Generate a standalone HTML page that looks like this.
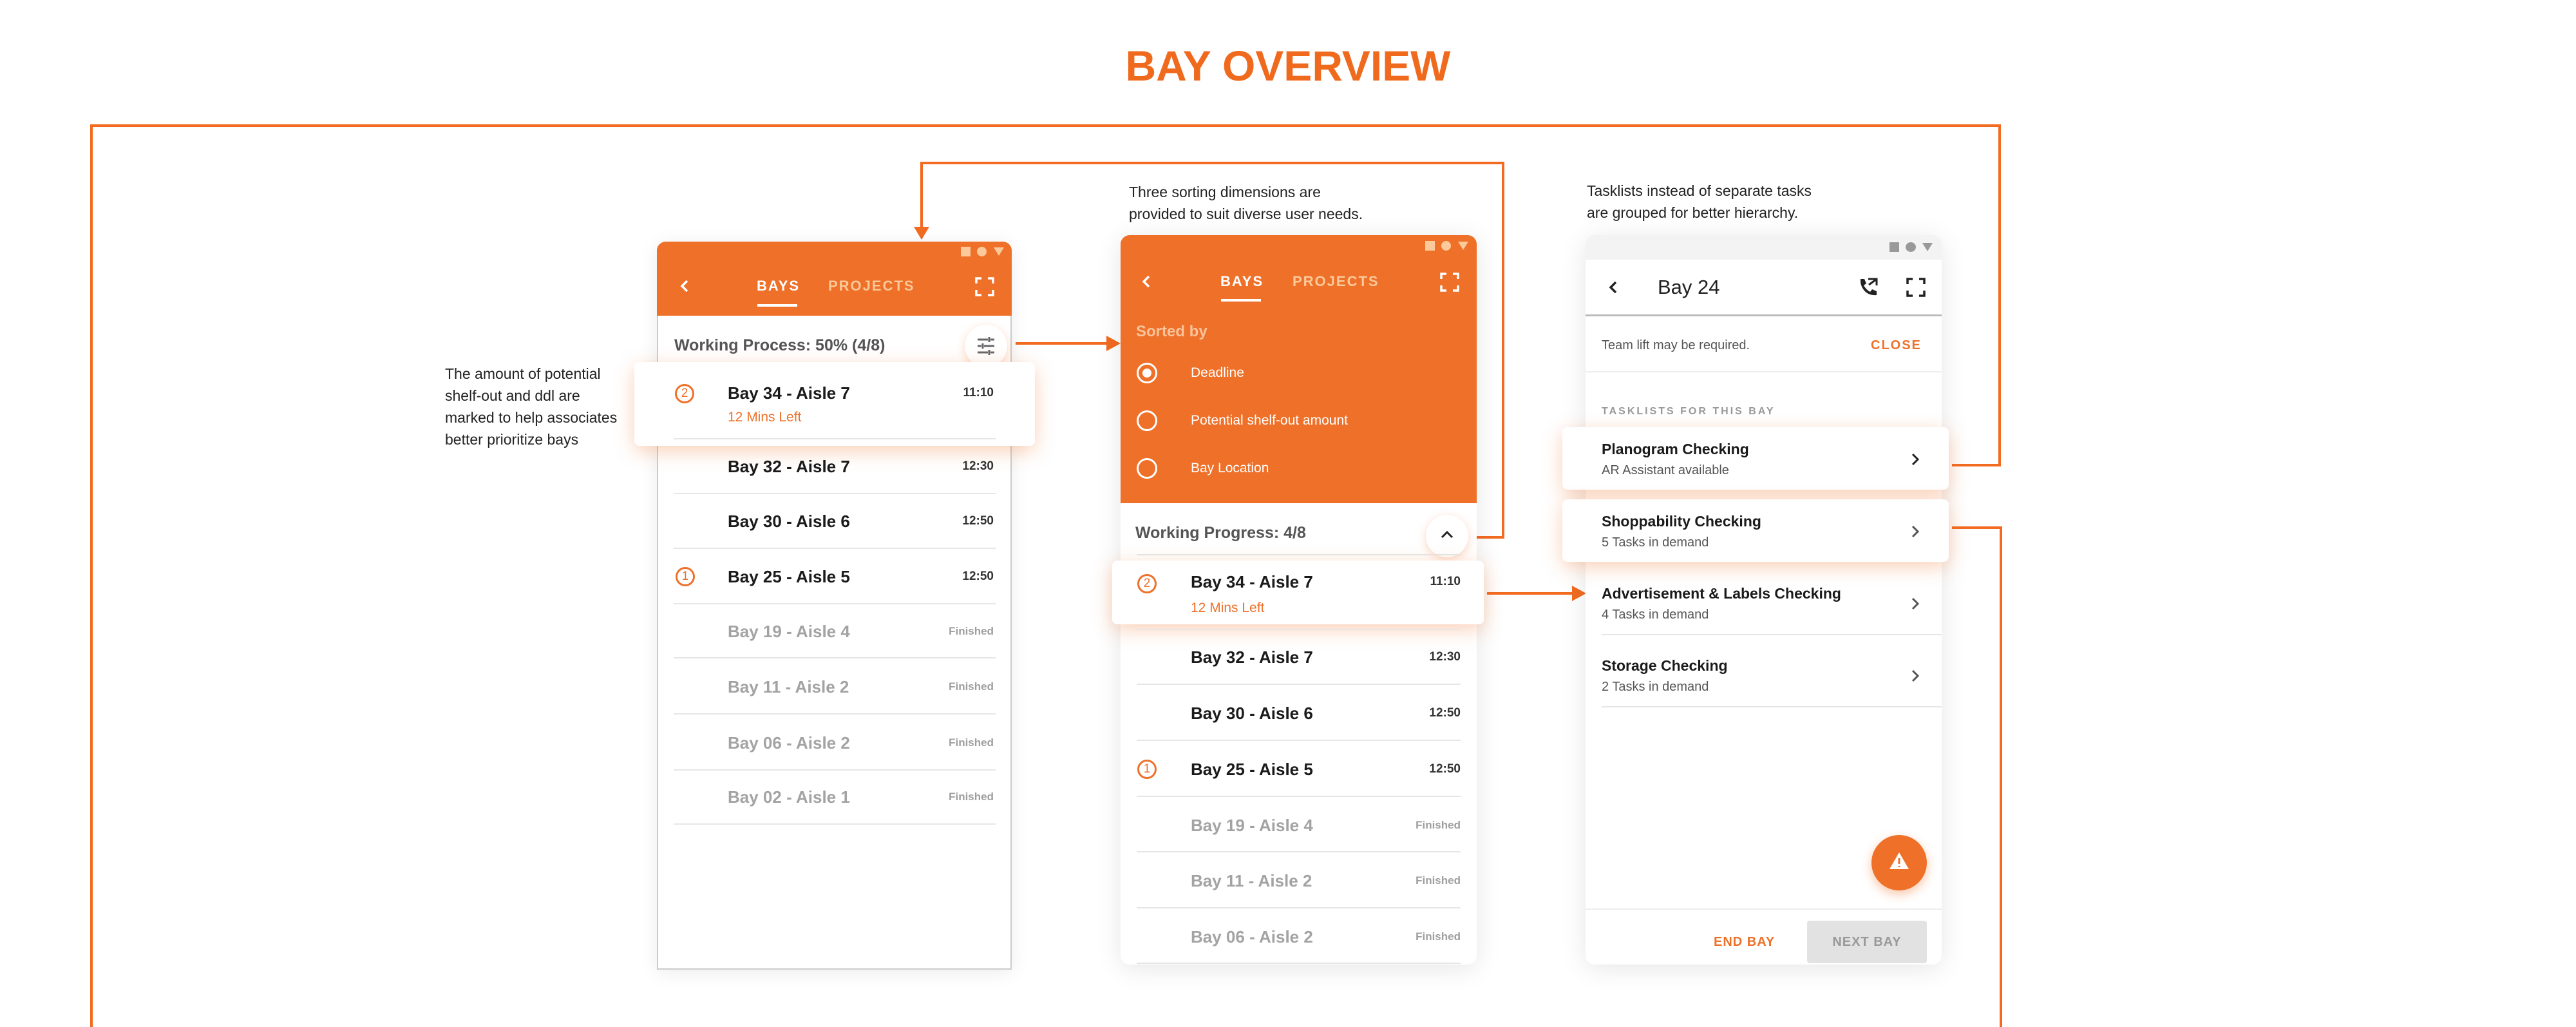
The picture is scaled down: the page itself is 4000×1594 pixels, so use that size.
<!DOCTYPE html>
<html><head><meta charset="utf-8"><style>
*{margin:0;padding:0;box-sizing:border-box}
body{width:4000px;height:1594px;position:relative;overflow:hidden;background:#fff;font-family:"Liberation Sans",sans-serif;}
.a{position:absolute;white-space:nowrap}
.t{line-height:40px;height:40px}
.o{background:#EE7029}
.ln{position:absolute;background:#F26B21}
.sep{position:absolute;height:2px;background:#e6e6e6}
.bay{font-weight:bold;font-size:26px;color:#1a1a1a}
.gray{color:#a3a3a3}
.tm{font-weight:bold;font-size:19px;color:#333;text-align:right}
.fin{font-weight:bold;font-size:17px;color:#9e9e9e;text-align:right}
.sub{font-size:21px;color:#EE7029}
.num{position:absolute;width:30px;height:30px;border:3px solid #EE7029;border-radius:50%;color:#EE7029;font-size:19px;line-height:24px;text-align:center}
.tab{font-size:22px;font-weight:bold;letter-spacing:2px}
.card{position:absolute;background:#fff;border-radius:8px;box-shadow:0 8px 30px rgba(240,120,50,.35)}
.ann{font-size:23px;color:#222;line-height:34px}
</style></head><body>

<div class="a" style="left:0;width:4000px;top:64px;text-align:center;font-size:66px;font-weight:bold;color:#F06A1E;line-height:76px">BAY OVERVIEW</div>

<div class="ln" style="left:140px;top:193px;width:2967px;height:4px"></div>
<div class="ln" style="left:140px;top:193px;width:4px;height:1401px"></div>
<div class="ln" style="left:3103px;top:193px;width:4px;height:531px"></div>
<div class="ln" style="left:3031px;top:720px;width:76px;height:4px"></div>
<div class="ln" style="left:3031px;top:817px;width:76px;height:4px"></div>
<div class="ln" style="left:3105px;top:817px;width:4px;height:777px"></div>

<div class="ln" style="left:2293px;top:832px;width:43px;height:4px"></div>
<div class="ln" style="left:2332px;top:251px;width:4px;height:585px"></div>
<div class="ln" style="left:1429px;top:251px;width:907px;height:4px"></div>
<div class="ln" style="left:1429px;top:251px;width:4px;height:105px"></div>
<div class="a" style="left:1419px;top:352px;width:0;height:0;border-left:12px solid transparent;border-right:12px solid transparent;border-top:20px solid #F26B21"></div>

<div class="ln" style="left:1577px;top:531px;width:145px;height:4px"></div>
<div class="a" style="left:1718px;top:521px;border-top:12px solid transparent;border-bottom:12px solid transparent;border-left:22px solid #F26B21"></div>
<div class="ln" style="left:2309px;top:919px;width:136px;height:4px"></div>
<div class="a" style="left:2441px;top:909px;border-top:12px solid transparent;border-bottom:12px solid transparent;border-left:22px solid #F26B21"></div>

<div class="a ann" style="left:691px;top:563px">The amount of potential<br>shelf-out and ddl are<br>marked to help associates<br>better prioritize bays</div>
<div class="a ann" style="left:1753px;top:281px">Three sorting dimensions are<br>provided to suit diverse user needs.</div>
<div class="a ann" style="left:2464px;top:279px">Tasklists instead of separate tasks<br>are grouped for better hierarchy.</div>

<!-- PHONE 1 -->
<div class="a" style="left:1020px;top:375px;width:551px;height:1130px;background:#fff;border:2px solid #ccc;border-top:none;border-radius:14px 14px 0 0;box-shadow:0 4px 30px rgba(0,0,0,.08)"></div>
<div class="a o" style="left:1020px;top:375px;width:551px;height:115px;border-radius:14px 14px 0 0"></div>
<div class="a" style="left:1492px;top:383px;width:15px;height:15px;background:#fbc99a"></div>
<div class="a" style="left:1517px;top:383px;width:15px;height:15px;background:#fbc99a;border-radius:50%"></div>
<div class="a" style="left:1543px;top:384px;border-left:8px solid transparent;border-right:8px solid transparent;border-top:13px solid #fbc99a"></div>
<svg class="a" style="left:1053px;top:432px" width="20" height="24"><path d="M14 4 L6 12 L14 20" stroke="#fff" stroke-width="3.5" fill="none"/></svg>
<div class="a t tab" style="left:1175px;top:424px;color:#fff">BAYS</div>
<div class="a" style="left:1176px;top:472px;width:62px;height:4px;background:#fff"></div>
<div class="a t tab" style="left:1286px;top:424px;color:#fbc99a">PROJECTS</div>
<svg class="a" style="left:1514px;top:430px" width="30" height="30"><path d="M2 10V2h8M20 2h8v8M28 20v8h-8M10 28H2v-8" stroke="#fff" stroke-width="3.5" fill="none"/></svg>
<div class="a t" style="left:1047px;top:516px;font-size:25px;font-weight:bold;color:#555">Working Process: 50% (4/8)</div>
<div class="a" style="left:1498px;top:504px;width:66px;height:66px;border-radius:50%;background:#fff;box-shadow:0 4px 14px rgba(240,120,50,.3)"></div>
<svg class="a" style="left:1515px;top:521px" width="32" height="32"><path d="M3 6h16M23 6h6M3 16h6M13 16h16M3 26h16M23 26h6M21 2v8M11 12v8M21 22v8" stroke="#666" stroke-width="3" fill="none"/></svg>
<div class="sep" style="left:1046px;top:574px;width:500px"></div>

<div class="card" style="left:985px;top:562px;width:622px;height:130px"></div>
<div class="num" style="left:1048px;top:596px">2</div>
<div class="a t bay" style="left:1130px;top:590px">Bay 34 - Aisle 7</div>
<div class="a t sub" style="left:1130px;top:628px">12 Mins Left</div>
<div class="a t tm" style="left:1443px;top:590px;width:100px">11:10</div>
<div class="sep" style="left:1046px;top:680px;width:500px"></div>

<div class="a t bay" style="left:1130px;top:704px">Bay 32 - Aisle 7</div><div class="a t tm" style="left:1443px;top:704px;width:100px">12:30</div>
<div class="sep" style="left:1046px;top:765px;width:500px"></div>
<div class="a t bay" style="left:1130px;top:789px">Bay 30 - Aisle 6</div><div class="a t tm" style="left:1443px;top:789px;width:100px">12:50</div>
<div class="sep" style="left:1046px;top:850px;width:500px"></div>
<div class="num" style="left:1049px;top:880px">1</div>
<div class="a t bay" style="left:1130px;top:875px">Bay 25 - Aisle 5</div><div class="a t tm" style="left:1443px;top:875px;width:100px">12:50</div>
<div class="sep" style="left:1046px;top:936px;width:500px"></div>
<div class="a t bay gray" style="left:1130px;top:960px">Bay 19 - Aisle 4</div><div class="a t fin" style="left:1423px;top:960px;width:120px">Finished</div>
<div class="sep" style="left:1046px;top:1020px;width:500px"></div>
<div class="a t bay gray" style="left:1130px;top:1046px">Bay 11 - Aisle 2</div><div class="a t fin" style="left:1423px;top:1046px;width:120px">Finished</div>
<div class="sep" style="left:1046px;top:1107px;width:500px"></div>
<div class="a t bay gray" style="left:1130px;top:1133px">Bay 06 - Aisle 2</div><div class="a t fin" style="left:1423px;top:1133px;width:120px">Finished</div>
<div class="sep" style="left:1046px;top:1194px;width:500px"></div>
<div class="a t bay gray" style="left:1130px;top:1217px">Bay 02 - Aisle 1</div><div class="a t fin" style="left:1423px;top:1217px;width:120px">Finished</div>
<div class="sep" style="left:1046px;top:1278px;width:500px"></div>

<!-- PHONE 2 -->
<div class="a" style="left:1740px;top:365px;width:553px;height:1132px;background:#fff;border-radius:14px;box-shadow:0 6px 40px rgba(0,0,0,.1)"></div>
<div class="a o" style="left:1740px;top:365px;width:553px;height:416px;border-radius:14px 14px 0 0"></div>
<div class="a" style="left:2213px;top:374px;width:15px;height:15px;background:#fbc99a"></div>
<div class="a" style="left:2238px;top:374px;width:15px;height:15px;background:#fbc99a;border-radius:50%"></div>
<div class="a" style="left:2264px;top:375px;border-left:8px solid transparent;border-right:8px solid transparent;border-top:13px solid #fbc99a"></div>
<svg class="a" style="left:1770px;top:425px" width="20" height="24"><path d="M14 4 L6 12 L14 20" stroke="#fff" stroke-width="3.5" fill="none"/></svg>
<div class="a t tab" style="left:1895px;top:417px;color:#fff">BAYS</div>
<div class="a" style="left:1896px;top:464px;width:62px;height:4px;background:#fff"></div>
<div class="a t tab" style="left:2007px;top:417px;color:#fbc99a">PROJECTS</div>
<svg class="a" style="left:2236px;top:423px" width="30" height="30"><path d="M2 10V2h8M20 2h8v8M28 20v8h-8M10 28H2v-8" stroke="#fff" stroke-width="3.5" fill="none"/></svg>
<div class="a t" style="left:1764px;top:495px;font-size:24px;font-weight:bold;color:#f9c39c">Sorted by</div>
<div class="a" style="left:1765px;top:563px;width:32px;height:32px;border:3px solid #fff;border-radius:50%"></div>
<div class="a" style="left:1774px;top:572px;width:14px;height:14px;background:#fff;border-radius:50%"></div>
<div class="a t" style="left:1849px;top:559px;font-size:21px;color:#fff">Deadline</div>
<div class="a" style="left:1765px;top:637px;width:32px;height:32px;border:3px solid #fff;border-radius:50%"></div>
<div class="a t" style="left:1849px;top:633px;font-size:21px;color:#fff">Potential shelf-out amount</div>
<div class="a" style="left:1765px;top:711px;width:32px;height:32px;border:3px solid #fff;border-radius:50%"></div>
<div class="a t" style="left:1849px;top:707px;font-size:21px;color:#fff">Bay Location</div>
<div class="a t" style="left:1763px;top:807px;font-size:25px;font-weight:bold;color:#555">Working Progress: 4/8</div>
<div class="a" style="left:2214px;top:799px;width:66px;height:66px;border-radius:50%;background:#fff;box-shadow:0 4px 14px rgba(240,120,50,.3)"></div>
<svg class="a" style="left:2236px;top:821px" width="22" height="16"><path d="M3 13 L11 5 L19 13" stroke="#222" stroke-width="3" fill="none"/></svg>
<div class="sep" style="left:1765px;top:860px;width:503px"></div>

<div class="card" style="left:1727px;top:870px;width:577px;height:99px"></div>
<div class="num" style="left:1766px;top:891px">2</div>
<div class="a t bay" style="left:1849px;top:883px">Bay 34 - Aisle 7</div>
<div class="a t sub" style="left:1849px;top:924px">12 Mins Left</div>
<div class="a t tm" style="left:2168px;top:883px;width:100px">11:10</div>
<div class="sep" style="left:1765px;top:976px;width:503px"></div>
<div class="a t bay" style="left:1849px;top:1000px">Bay 32 - Aisle 7</div><div class="a t tm" style="left:2168px;top:1000px;width:100px">12:30</div>
<div class="sep" style="left:1765px;top:1061px;width:503px"></div>
<div class="a t bay" style="left:1849px;top:1087px">Bay 30 - Aisle 6</div><div class="a t tm" style="left:2168px;top:1087px;width:100px">12:50</div>
<div class="sep" style="left:1765px;top:1148px;width:503px"></div>
<div class="num" style="left:1766px;top:1179px">1</div>
<div class="a t bay" style="left:1849px;top:1174px">Bay 25 - Aisle 5</div><div class="a t tm" style="left:2168px;top:1174px;width:100px">12:50</div>
<div class="sep" style="left:1765px;top:1235px;width:503px"></div>
<div class="a t bay gray" style="left:1849px;top:1261px">Bay 19 - Aisle 4</div><div class="a t fin" style="left:2148px;top:1261px;width:120px">Finished</div>
<div class="sep" style="left:1765px;top:1321px;width:503px"></div>
<div class="a t bay gray" style="left:1849px;top:1347px">Bay 11 - Aisle 2</div><div class="a t fin" style="left:2148px;top:1347px;width:120px">Finished</div>
<div class="sep" style="left:1765px;top:1408px;width:503px"></div>
<div class="a t bay gray" style="left:1849px;top:1434px">Bay 06 - Aisle 2</div><div class="a t fin" style="left:2148px;top:1434px;width:120px">Finished</div>
<div class="sep" style="left:1765px;top:1494px;width:503px"></div>

<!-- PHONE 3 -->
<div class="a" style="left:2462px;top:365px;width:553px;height:1132px;background:#fff;border-radius:14px;box-shadow:0 6px 40px rgba(0,0,0,.1)"></div>
<div class="a" style="left:2462px;top:365px;width:553px;height:38px;background:#f3f3f3;border-radius:14px 14px 0 0"></div>
<div class="a" style="left:2934px;top:376px;width:15px;height:15px;background:#999"></div>
<div class="a" style="left:2959px;top:376px;width:16px;height:15px;background:#999;border-radius:50%"></div>
<div class="a" style="left:2985px;top:377px;border-left:8px solid transparent;border-right:8px solid transparent;border-top:13px solid #999"></div>
<svg class="a" style="left:2495px;top:434px" width="20" height="24"><path d="M14 4 L6 12 L14 20" stroke="#222" stroke-width="3.5" fill="none"/></svg>
<div class="a t" style="left:2574px;top:426px;font-size:31px;color:#222">Bay 24</div>
<svg class="a" style="left:2885px;top:430px" width="32" height="30"><path d="M4 3 L10 3 L13 10 L9 13 Q13 20 19 23 L22 19 L29 22 L29 28 Q16 29 9 20 Q3 12 4 3Z" fill="#222"/><path d="M16 3h13v10M17 12 L28 4" stroke="#222" stroke-width="3" fill="none"/></svg>
<svg class="a" style="left:2960px;top:431px" width="30" height="30"><path d="M2 10V2h8M20 2h8v8M28 20v8h-8M10 28H2v-8" stroke="#222" stroke-width="3.5" fill="none"/></svg>
<div class="a" style="left:2462px;top:488px;width:553px;height:3px;background:#bbb"></div>
<div class="a t" style="left:2487px;top:516px;font-size:20px;color:#555">Team lift may be required.</div>
<div class="a t" style="left:2905px;top:516px;font-size:20px;font-weight:bold;color:#EE7029;letter-spacing:2px">CLOSE</div>
<div class="sep" style="left:2462px;top:576px;width:553px;background:#eee"></div>
<div class="a t" style="left:2487px;top:619px;font-size:16px;font-weight:bold;color:#999;letter-spacing:3px">TASKLISTS FOR THIS BAY</div>

<div class="card" style="left:2426px;top:663px;width:600px;height:97px"></div>
<div class="a t" style="left:2487px;top:677px;font-size:23px;font-weight:bold;color:#1a1a1a">Planogram Checking</div>
<div class="a t" style="left:2487px;top:710px;font-size:20px;color:#555">AR Assistant available</div>
<svg class="a" style="left:2966px;top:702px" width="16" height="22"><path d="M4 3 L12 11 L4 19" stroke="#222" stroke-width="3" fill="none"/></svg>
<div class="card" style="left:2426px;top:775px;width:600px;height:97px"></div>
<div class="a t" style="left:2487px;top:789px;font-size:23px;font-weight:bold;color:#1a1a1a">Shoppability Checking</div>
<div class="a t" style="left:2487px;top:822px;font-size:20px;color:#555">5 Tasks in demand</div>
<svg class="a" style="left:2966px;top:814px" width="16" height="22"><path d="M4 3 L12 11 L4 19" stroke="#555" stroke-width="3" fill="none"/></svg>
<div class="a t" style="left:2487px;top:901px;font-size:23px;font-weight:bold;color:#1a1a1a">Advertisement &amp; Labels Checking</div>
<div class="a t" style="left:2487px;top:934px;font-size:20px;color:#555">4 Tasks in demand</div>
<svg class="a" style="left:2966px;top:926px" width="16" height="22"><path d="M4 3 L12 11 L4 19" stroke="#555" stroke-width="3" fill="none"/></svg>
<div class="sep" style="left:2487px;top:984px;width:528px"></div>
<div class="a t" style="left:2487px;top:1013px;font-size:23px;font-weight:bold;color:#1a1a1a">Storage Checking</div>
<div class="a t" style="left:2487px;top:1046px;font-size:20px;color:#555">2 Tasks in demand</div>
<svg class="a" style="left:2966px;top:1038px" width="16" height="22"><path d="M4 3 L12 11 L4 19" stroke="#555" stroke-width="3" fill="none"/></svg>
<div class="sep" style="left:2487px;top:1096px;width:528px"></div>

<div class="a" style="left:2906px;top:1296px;width:86px;height:86px;border-radius:50%;background:#EE7029;box-shadow:0 6px 16px rgba(238,112,41,.4)"></div>
<svg class="a" style="left:2932px;top:1320px" width="34" height="32"><path d="M17 3 L32 29 L2 29Z" fill="#fff"/><path d="M17 12v9M17 24v2" stroke="#EE7029" stroke-width="3"/></svg>
<div class="sep" style="left:2462px;top:1410px;width:553px;background:#eee"></div>
<div class="a t" style="left:2661px;top:1442px;font-size:20px;font-weight:bold;color:#EE7029;letter-spacing:1px">END BAY</div>
<div class="a" style="left:2806px;top:1429px;width:186px;height:66px;background:#e2e2e2;border-radius:4px"></div>
<div class="a t" style="left:2806px;top:1442px;width:186px;text-align:center;font-size:20px;font-weight:bold;color:#999;letter-spacing:1px">NEXT BAY</div>

</body></html>
